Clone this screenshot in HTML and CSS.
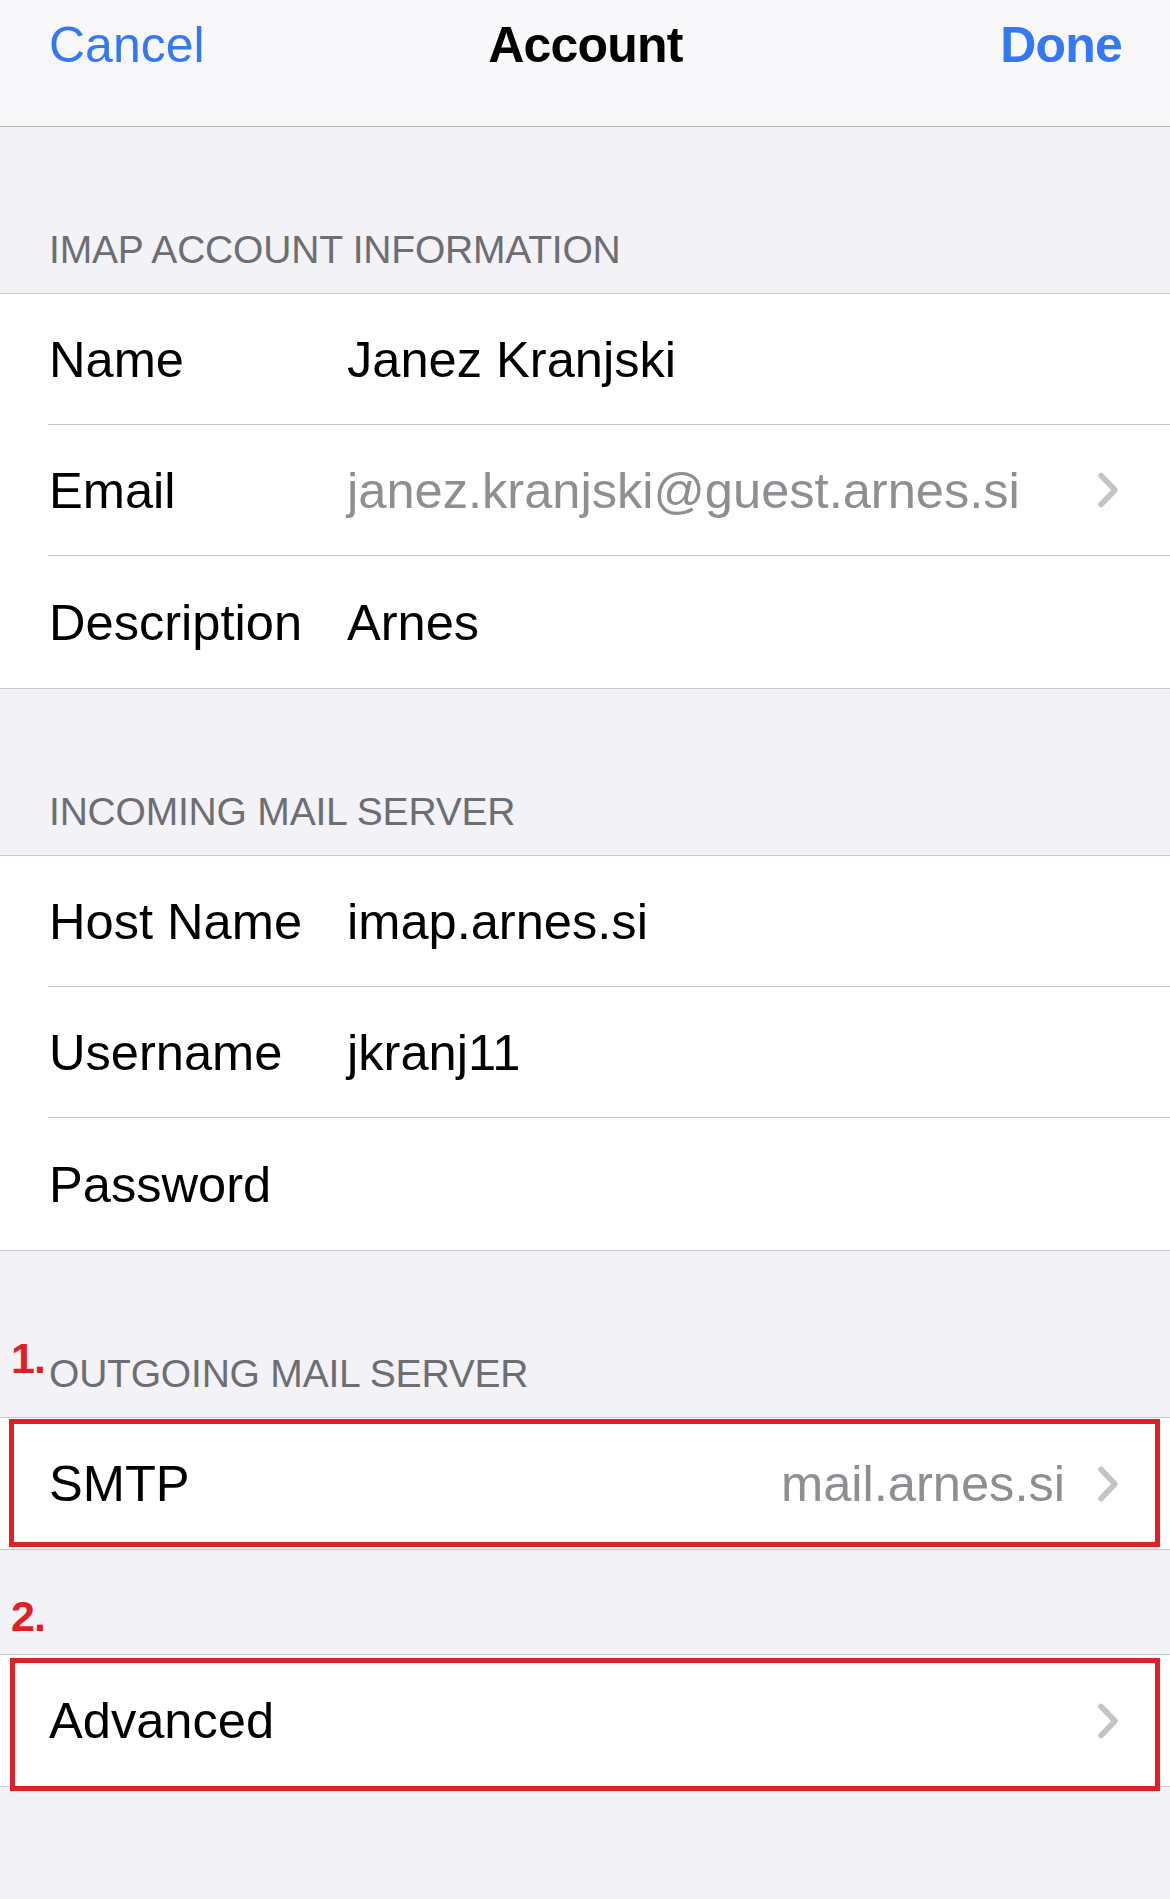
FILE: index.html
```html
<!DOCTYPE html>
<html lang="en">
<head>
    <meta charset="UTF-8">
    <meta name="viewport" content="width=device-width, initial-scale=1.0">
    <title>Account</title>
    <link rel="stylesheet" href="styles.css">
</head>
<body>

    <header class="navbar">
        <span class="nav-btn">Cancel</span>
        <h1 class="nav-title">Account</h1>
        <span class="nav-btn nav-done">Done</span>
    </header>

    <!-- IMAP account -->
    <h2 class="group-title">IMAP Account Information</h2>
    <ul class="group">
        <li class="row">
            <span class="row-label">Name</span>
            <span class="row-value">Janez Kranjski</span>
        </li>
        <li class="row">
            <span class="row-label">Email</span>
            <span class="row-value muted">janez.kranjski@guest.arnes.si</span>
            <svg class="chevron" viewBox="0 0 24 40"><path d="M5 5.5 L19 20 L5 34.5"/></svg>
        </li>
        <li class="row">
            <span class="row-label">Description</span>
            <span class="row-value">Arnes</span>
        </li>
    </ul>

    <!-- Incoming -->
    <h2 class="group-title">Incoming Mail Server</h2>
    <ul class="group">
        <li class="row">
            <span class="row-label">Host Name</span>
            <span class="row-value">imap.arnes.si</span>
        </li>
        <li class="row">
            <span class="row-label">Username</span>
            <span class="row-value">jkranj11</span>
        </li>
        <li class="row">
            <span class="row-label">Password</span>
            <span class="row-value"></span>
        </li>
    </ul>

    <!-- Outgoing -->
    <h2 class="group-title">
        <span class="mark mark-float">1.</span>
        Outgoing Mail Server
    </h2>
    <ul class="group group-single marked marked-smtp">
        <li class="row">
            <span class="row-label">SMTP</span>
            <span class="row-value muted trailing">mail.arnes.si</span>
            <svg class="chevron" viewBox="0 0 24 40"><path d="M5 5.5 L19 20 L5 34.5"/></svg>
        </li>
    </ul>

    <div class="gap">
        <span class="mark">2.</span>
    </div>
    <ul class="group group-single marked marked-advanced">
        <li class="row">
            <span class="row-label">Advanced</span>
            <svg class="chevron" viewBox="0 0 24 40"><path d="M5 5.5 L19 20 L5 34.5"/></svg>
        </li>
    </ul>

</body>
</html>
```

FILE: styles.css
```css
body {
    margin: 0;
    min-height: 100vh;
    background-color: #f2f2f7;
    font-family: "Liberation Sans", Arial, sans-serif;
    color: #000;
}

.navbar {
    height: 127px;
    box-sizing: border-box;
    padding: 20px 48px 0 49px;
    background-color: #f8f8fa;
    border-bottom: 1px solid #b2b2b2;
    display: grid;
    grid-template-columns: 1fr auto 1fr;
    align-items: start;
    font-size: 50px;
    line-height: 50px;
}

.nav-btn {
    color: #3478f6;
}

.nav-title {
    margin: 0;
    font-size: 50px;
    font-weight: 700;
    letter-spacing: -0.8px;
}

.nav-done {
    justify-self: end;
    font-weight: 700;
    letter-spacing: -0.8px;
}

.group-title {
    position: relative;
    margin: 0;
    height: 166px;
    box-sizing: border-box;
    padding: 0 0 24px 49px;
    display: flex;
    align-items: flex-end;
    font-size: 39px;
    line-height: 38px;
    font-weight: 400;
    letter-spacing: -0.2px;
    text-transform: uppercase;
    color: #6d6d72;
}

.group {
    position: relative;
    list-style: none;
    margin: 0;
    padding: 0;
    background-color: #fff;
    border-top: 1px solid #c8c7cc;
    border-bottom: 1px solid #c8c7cc;
}

.row {
    display: flex;
    align-items: center;
    height: 131px;
    box-sizing: border-box;
    margin-left: 48px;
    padding-right: 50px;
    border-bottom: 1px solid #c8c7cc;
    font-size: 50.6px;
}

.row:last-child {
    height: 132px;
    border-bottom: none;
}

.group-single .row:last-child {
    height: 131px;
}

.row-label {
    flex: none;
    width: 298px;
    margin-left: 1px;
    white-space: nowrap;
}

.row-value {
    white-space: nowrap;
}

.muted {
    color: #8e8e93;
}

.trailing {
    margin-left: auto;
    margin-right: 31px;
}

.chevron {
    flex: none;
    width: 24px;
    height: 40px;
    margin-left: auto;
}

.trailing + .chevron {
    margin-left: 0;
}

.chevron path {
    fill: none;
    stroke: #c4c4c7;
    stroke-width: 5.5;
    stroke-linecap: round;
    stroke-linejoin: round;
}

/* red annotations */
.mark {
    color: #e31f26;
    font-size: 43px;
    line-height: 42px;
    font-weight: 700;
    letter-spacing: -1px;
    text-transform: none;
}

.mark-float {
    position: absolute;
    left: 11px;
    bottom: 38px;
}

.gap {
    height: 104px;
    box-sizing: border-box;
    padding: 0 0 17px 11px;
    display: flex;
    align-items: flex-end;
}

.marked::after {
    content: "";
    position: absolute;
    box-sizing: border-box;
    border: 5px solid #e31f26;
    pointer-events: none;
}

.marked-smtp::after {
    left: 9px;
    right: 10px;
    top: 1px;
    height: 128px;
}

.marked-advanced::after {
    left: 10px;
    right: 10px;
    top: 3px;
    height: 133px;
}
```
